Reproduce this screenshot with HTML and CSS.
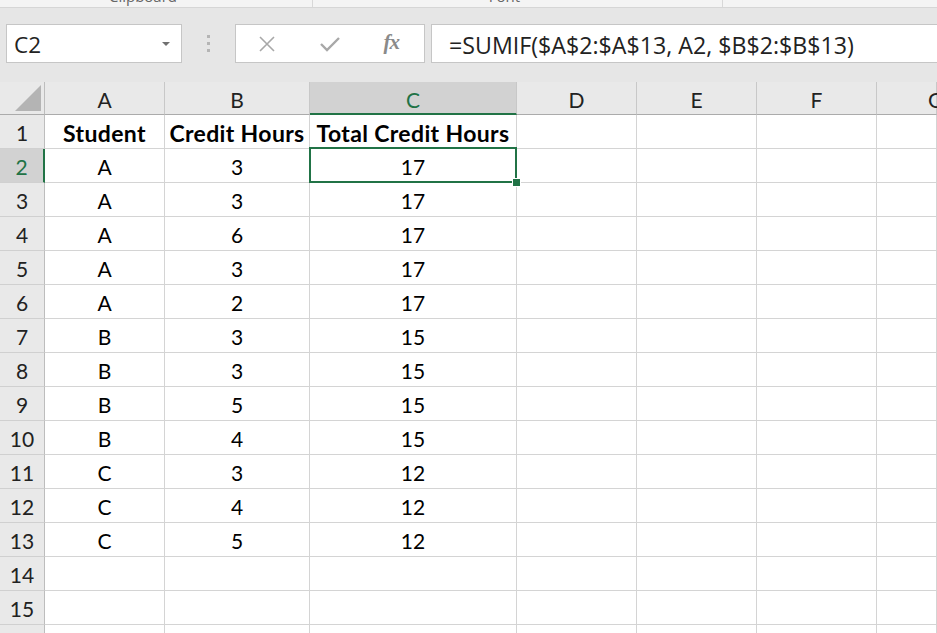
FILE: index.html
```html
<!DOCTYPE html>
<html>
<head>
<meta charset="utf-8">
<link rel="stylesheet" href="styles.css">
</head>
<body>
<div class="app">
  <div class="ribbon">
    <div class="group g-clip"><span class="glabel">Clipboard</span></div>
    <div class="group g-font"><span class="glabel">Font</span></div>
    <div class="group g-rest"></div>
  </div>
  <div class="fbar">
    <div class="namebox">
      <span class="nb-text">C2</span>
      <svg class="nb-arrow" width="8" height="4" viewBox="0 0 8 4"><path d="M0 0H8L4 4Z" fill="#707070"/></svg>
    </div>
    <div class="grip"><i></i><i></i><i></i></div>
    <div class="fbtns">
      <svg class="ic" width="18" height="18" viewBox="0 0 18 18"><path d="M2 2L16 16M16 2L2 16" stroke="#a8a8a8" stroke-width="1.6" fill="none"/></svg>
      <svg class="ic" width="22" height="18" viewBox="0 0 22 18"><path d="M2 9L8 15L20 3" stroke="#a8a8a8" stroke-width="2.4" fill="none"/></svg>
      <span class="fx">fx</span>
    </div>
    <div class="formula">=SUMIF($A$2:$A$13, A2, $B$2:$B$13)</div>
  </div>
  <div class="sheet">
    <div class="corner"><span class="tri"></span></div>
    <div class="ch">A</div><div class="ch">B</div><div class="ch ch-sel">C</div><div class="ch">D</div><div class="ch">E</div><div class="ch">F</div><div class="ch ch-g">G</div>

    <div class="rh">1</div><div class="c b">Student</div><div class="c b">Credit Hours</div><div class="c b">Total Credit Hours</div><div class="c"></div><div class="c"></div><div class="c"></div><div class="c"></div>
    <div class="rh rh-sel">2</div><div class="c">A</div><div class="c">3</div><div class="c sel">17</div><div class="c"></div><div class="c"></div><div class="c"></div><div class="c"></div>
    <div class="rh">3</div><div class="c">A</div><div class="c">3</div><div class="c">17</div><div class="c"></div><div class="c"></div><div class="c"></div><div class="c"></div>
    <div class="rh">4</div><div class="c">A</div><div class="c">6</div><div class="c">17</div><div class="c"></div><div class="c"></div><div class="c"></div><div class="c"></div>
    <div class="rh">5</div><div class="c">A</div><div class="c">3</div><div class="c">17</div><div class="c"></div><div class="c"></div><div class="c"></div><div class="c"></div>
    <div class="rh">6</div><div class="c">A</div><div class="c">2</div><div class="c">17</div><div class="c"></div><div class="c"></div><div class="c"></div><div class="c"></div>
    <div class="rh">7</div><div class="c">B</div><div class="c">3</div><div class="c">15</div><div class="c"></div><div class="c"></div><div class="c"></div><div class="c"></div>
    <div class="rh">8</div><div class="c">B</div><div class="c">3</div><div class="c">15</div><div class="c"></div><div class="c"></div><div class="c"></div><div class="c"></div>
    <div class="rh">9</div><div class="c">B</div><div class="c">5</div><div class="c">15</div><div class="c"></div><div class="c"></div><div class="c"></div><div class="c"></div>
    <div class="rh">10</div><div class="c">B</div><div class="c">4</div><div class="c">15</div><div class="c"></div><div class="c"></div><div class="c"></div><div class="c"></div>
    <div class="rh">11</div><div class="c">C</div><div class="c">3</div><div class="c">12</div><div class="c"></div><div class="c"></div><div class="c"></div><div class="c"></div>
    <div class="rh">12</div><div class="c">C</div><div class="c">4</div><div class="c">12</div><div class="c"></div><div class="c"></div><div class="c"></div><div class="c"></div>
    <div class="rh">13</div><div class="c">C</div><div class="c">5</div><div class="c">12</div><div class="c"></div><div class="c"></div><div class="c"></div><div class="c"></div>
    <div class="rh">14</div><div class="c"></div><div class="c"></div><div class="c"></div><div class="c"></div><div class="c"></div><div class="c"></div><div class="c"></div>
    <div class="rh">15</div><div class="c"></div><div class="c"></div><div class="c"></div><div class="c"></div><div class="c"></div><div class="c"></div><div class="c"></div>
    <div class="rh">16</div><div class="c"></div><div class="c"></div><div class="c"></div><div class="c"></div><div class="c"></div><div class="c"></div><div class="c"></div>
  </div>
</div>
</body>
</html>
```

FILE: styles.css
```css
* { box-sizing: border-box; }
html, body { margin: 0; padding: 0; background: #ffffff; }
body { width: 937px; height: 633px; overflow: hidden; font-family: Lato, "Open Sans", sans-serif; }
.app { width: 937px; height: 633px; overflow: hidden; display: flex; flex-direction: column; }

.ribbon { height: 8px; flex: none; display: flex; background: #f4f4f4; border-bottom: 1px solid #d6d6d6; overflow: hidden; }
.group { position: relative; display: flex; justify-content: center; overflow: hidden; }
.g-clip { width: 313px; border-right: 1px solid #d8d8d8; padding-right: 26px; }
.g-font { width: 410px; border-right: 1px solid #d8d8d8; padding-right: 26px; }
.g-rest { flex: 1; }
.glabel { font-family: "Open Sans", sans-serif; font-size: 15px; color: #666; line-height: 15px; margin-top: -11px; }

.fbar { height: 74px; flex: none; background: #e6e6e6; display: flex; align-items: flex-start; padding: 16px 0 0 6px; }
.namebox { width: 176px; height: 39px; background: #fff; border: 1px solid #c6c6c6; display: flex; align-items: center; justify-content: space-between; padding: 2px 11px 0 7px; }
.nb-text { font-family: "Open Sans", sans-serif; font-size: 22.5px; color: #222; }
.nb-arrow { margin-top: -1px; }
.grip { width: 53px; height: 39px; display: flex; flex-direction: column; align-items: center; justify-content: center; gap: 4px; padding-left: 0; }
.grip i { display: block; width: 3px; height: 3px; background: #b5b5b5; }
.fbtns { width: 190px; height: 39px; background: #fff; border: 1px solid #c6c6c6; display: flex; align-items: center; padding: 0 25px 0 22px; justify-content: space-between; }
.fx { font-family: "Liberation Serif", serif; font-style: italic; font-weight: bold; font-size: 21px; color: #8a8a8a; letter-spacing: -1px; margin-bottom: 2px; }
.formula { flex: 1; height: 39px; margin-left: 6px; background: #fff; border: 1px solid #c6c6c6; border-right: none; font-family: "Open Sans", sans-serif; font-size: 23.2px; color: #222; display: flex; align-items: center; padding: 2px 0 0 17px; white-space: nowrap; }

.sheet { display: grid; grid-template-columns: 45px 120px 145px 207px 120px 120px 120px 60px; grid-template-rows: 33px; grid-auto-rows: 34px; font-size: 21px; color: #000; }
.corner { background: #e9e9e9; border-right: 1px solid #bdbdbd; border-bottom: 1px solid #ababab; display: flex; align-items: flex-end; justify-content: flex-end; padding: 0 3px 3px 0; }
.tri { width: 0; height: 0; border-style: solid; border-width: 0 0 26px 26px; border-color: transparent transparent #b4b4b4 transparent; }
.ch { background: #e9e9e9; border-right: 1px solid #c8c8c8; border-bottom: 1px solid #ababab; display: flex; align-items: center; justify-content: center; padding-top: 2px; font-size: 21px; color: #222; }
.ch-sel { background: #d2d2d2; color: #217346; border-bottom: 2px solid #217346; padding-top: 3px; }
.ch-g { justify-content: flex-start; padding-left: 51px; }
.rh { background: #e9e9e9; border-right: 1px solid #bdbdbd; border-bottom: 1px solid #d0d0d0; display: flex; align-items: center; justify-content: center; font-size: 21px; color: #222; padding-top: 2px; }
.rh-sel { background: #d2d2d2; color: #217346; border-right: 2px solid #217346; }
.c { border-right: 1px solid #d4d4d4; border-bottom: 1px solid #d4d4d4; display: flex; align-items: center; justify-content: center; white-space: nowrap; padding-top: 2px; }
.b { font-weight: bold; font-size: 23px; letter-spacing: 0.35px; }
.sel { position: relative; }
.sel::after { content: ""; position: absolute; top: -2px; left: -1px; right: -1px; bottom: -1px; border: 2px solid #217346; }
.sel::before { content: ""; position: absolute; right: -4px; bottom: -4px; width: 7px; height: 7px; background: #217346; border: 1px solid #fff; z-index: 2; box-sizing: content-box; margin: -1px; }
```
